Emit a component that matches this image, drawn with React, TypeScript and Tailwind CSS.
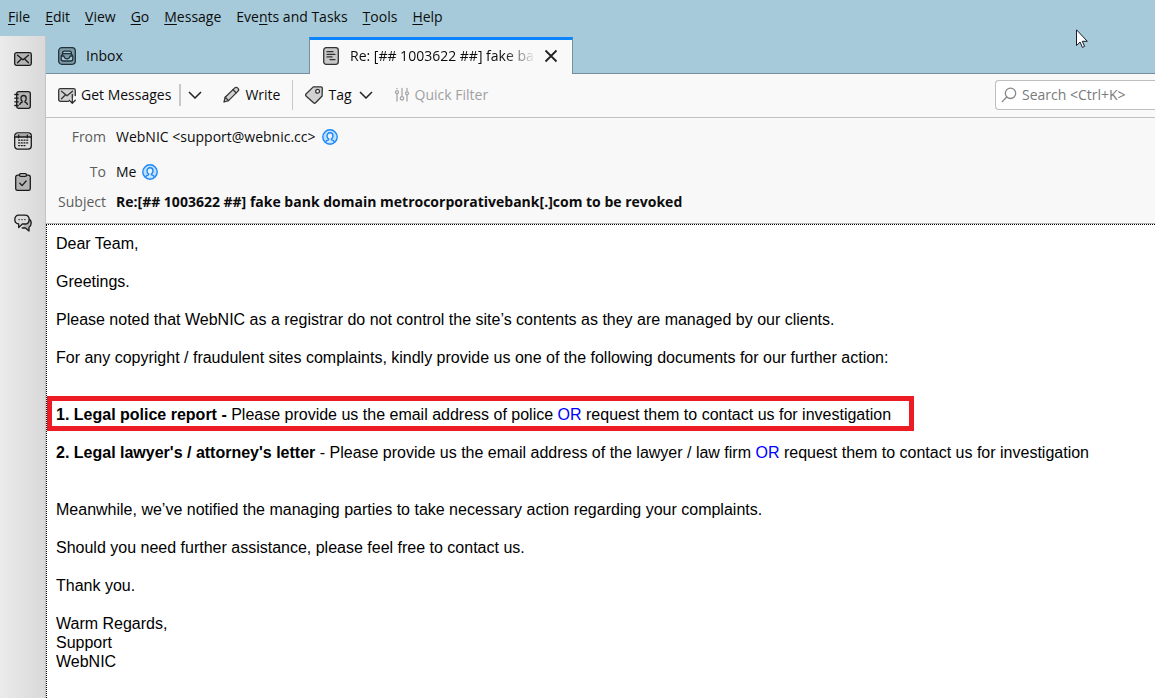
import React, { useState } from 'react';

interface MenuItem {
  before: string;
  hotkey: string;
  after: string;
}

const MENUS: MenuItem[] = [
  { before: '', hotkey: 'F', after: 'ile' },
  { before: '', hotkey: 'E', after: 'dit' },
  { before: '', hotkey: 'V', after: 'iew' },
  { before: '', hotkey: 'G', after: 'o' },
  { before: '', hotkey: 'M', after: 'essage' },
  { before: 'Eve', hotkey: 'n', after: 'ts and Tasks' },
  { before: '', hotkey: 'T', after: 'ools' },
  { before: '', hotkey: 'H', after: 'elp' },
];

function Icon({ children, className = '' }: { children: React.ReactNode; className?: string }) {
  return (
    <svg
      viewBox="0 0 18 18"
      className={`h-[18px] w-[18px] shrink-0 ${className}`}
      fill="none"
      stroke="currentColor"
      strokeWidth="1.3"
      strokeLinecap="round"
      strokeLinejoin="round"
      aria-hidden="true"
    >
      {children}
    </svg>
  );
}

const MailIcon = () => (
  <Icon>
    <rect x="0.7" y="2.7" width="16.6" height="12.6" rx="1.8" fill="#b4b4b4" />
    <path d="M3.5 5.2 9 9.8l5.5-4.6M3.5 12.8 7 9.2M14.5 12.8 11 9.2" />
  </Icon>
);

const AddressBookIcon = () => (
  <Icon>
    <rect x="2.7" y="0.7" width="13.6" height="16.6" rx="2" fill="#b4b4b4" />
    <path d="M0.8 3.5h3.4M0.8 7.2h3.4M0.8 10.8h3.4M0.8 14.5h3.4" />
    <path d="M5.8 13.4c.3-1.6 1.2-1.9 2.4-2.3v-.9C7.3 9.5 7 8.6 7 7.4c0-1.8 1-2.9 2.6-2.9s2.6 1.1 2.6 2.9c0 1.2-.3 2.1-1.2 2.8v.9c1.2.4 2.1.7 2.4 2.3" />
  </Icon>
);

const CalendarIcon = () => (
  <Icon>
    <rect x="0.7" y="0.9" width="16.6" height="16.2" rx="3" fill="#dcdcdc" />
    <path d="M1.4 3.4 3 1.500h12l1.600 1.900V5H1.400z" fill="#a9a9a9" stroke="none" />
    <path d="M0.8 5h16.4M4.7 3.2v2.6M13.3 3.2v2.6" />
    <path d="M4.6 8.2h1M7.3 8.2h1M10 8.2h1M12.7 8.2h1M4.6 10.9h1M7.3 10.9h1M10 10.9h1M12.7 10.9h1M4.6 13.6h1M7.3 13.6h1M10 13.6h1" />
  </Icon>
);

const TasksIcon = () => (
  <Icon>
    <rect x="1.7" y="2.2" width="14.6" height="15.2" rx="2" fill="#b4b4b4" />
    <rect x="5.5" y="0.7" width="7" height="2.6" rx="1.2" fill="#d4d4d4" />
    <path d="m5.8 10.2 2.3 2.4 4-4.6" />
  </Icon>
);

const ChatIcon = () => (
  <Icon>
    <path d="M14.5 4.8c1.7.7 2.7 2.2 2.7 4.3 0 2-.8 3.4-2.2 4.2v3.7l-3.6-3H8.2" fill="#b4b4b4" />
    <path d="M4.7 1.2h6.2c2.6 0 4.2 1.6 4.2 4.2S13.5 10 10.9 10H8.4L4.7 13.600V10C2.3 9.8.8 8 .8 5.6c0-2.6 1.5-4.4 3.9-4.4z" fill="#dcdcdc" />
    <path d="M5 5.6h.2M7.9 5.6h.2M10.8 5.6h.2" />
  </Icon>
);

const InboxIcon = () => (
  <Icon className="text-[#20313a]">
    <rect x="0.7" y="0.7" width="16.6" height="16.6" rx="3.2" fill="#7d9aa7" />
    <path d="M4.6 7V6c0-1.2.7-1.9 1.900-1.900h5c1.200 0 1.900.7 1.900 1.900v1" fill="#a6cad9" />
    <path d="M3.200 9h2.700c.3 1.900 1.300 2.900 3.100 2.900s2.800-1 3.100-2.900h2.700v3c0 1.200-.8 2-2 2H5.200c-1.200 0-2-.8-2-2z" fill="#a6cad9" />
    <path d="m3.600 8.400 1.400-1.700h8l1.400 1.700" />
  </Icon>
);

const MessageIcon = () => (
  <Icon className="text-[#333333]">
    <rect x="1.7" y="0.7" width="14.6" height="16.6" rx="2.5" fill="#c8c8c8" />
    <path d="M5 4.700h6M5 7.300h8M5 9.900h5M8 12.600h5" />
  </Icon>
);

const GetMessagesIcon = () => (
  <Icon className="text-[#333333]">
    <path d="M10.5 15.3h-8c-1 0-1.8-.8-1.8-1.8v-9c0-1 .8-1.800 1.800-1.800h13c1 0 1.800.8 1.800 1.800v5" fill="#d2d2d2" />
    <path d="M3.500 5.200 9 9.800l5.500-4.600M3.500 12.800 7 9.200" />
    <path d="M14.300 8.500v8.600M11.300 14.300l3 3 3-3" />
  </Icon>
);

const PencilIcon = () => (
  <Icon className="text-[#333333]">
    <path d="m2 16 1.200-4.800 9.600-9.300c.8-.8 1.900-.8 2.700 0l.5.500c.8.800.8 1.900 0 2.700l-9.500 9.500z" fill="#d2d2d2" />
    <path d="m11 3.700 3.200 3.200M3.200 11.200l3.300 3.400" />
  </Icon>
);

const TagIcon = () => (
  <Icon className="text-[#333333]">
    <path d="M8.300.900 16 .8c.8 0 1.300.5 1.300 1.300l-.2 7.900-6.500 6.800c-.6.600-1.400.6-2 0L1 9.900c-.5-.6-.5-1.300 0-1.900z" fill="#d2d2d2" />
    <circle cx="12.6" cy="5.3" r="1.9" fill="#f9f9fa" />
  </Icon>
);

const FilterIcon = () => (
  <Icon className="text-[#a6a6a6]">
    <path d="M4 2.500v.2M4 8.500V15M9 2.500v7M14 2.500v2.700M14 9v6" />
    <circle cx="4" cy="6.2" r="1.5" />
    <circle cx="9" cy="12.3" r="1.7" />
    <circle cx="14" cy="7.3" r="1.5" />
  </Icon>
);

const ChevronIcon = () => (
  <svg viewBox="0 0 14 8" className="h-2 w-[14px]" fill="none" stroke="#222222" strokeWidth="1.5" aria-hidden="true">
    <path d="m1 1 6 6 6-6" />
  </svg>
);

const ContactIcon = () => (
  <svg viewBox="0 0 16 16" className="h-4 w-4" fill="none" stroke="#1e88f5" strokeWidth="1.4" strokeLinecap="round" aria-hidden="true">
    <circle cx="8" cy="8" r="7.2" fill="#bfe0ff" />
    <path d="M4 12.600c.3-1.400 1.200-1.500 2.600-1.700v-1C5.500 9.200 5 8.200 5 6.900 5 5 6.200 3.800 8 3.800S11 5 11 6.900c0 1.300-.5 2.300-1.600 3v1c1.400.2 2.300.3 2.600 1.700" fill="#e6f3ff" />
  </svg>
);

const SPACES = [
  { label: 'Mail', icon: <MailIcon /> },
  { label: 'Address Book', icon: <AddressBookIcon /> },
  { label: 'Calendar', icon: <CalendarIcon /> },
  { label: 'Tasks', icon: <TasksIcon /> },
  { label: 'Chat', icon: <ChatIcon /> },
];

function MenuBar() {
  return (
    <nav className="flex h-9 items-center gap-[15px] px-2 pb-[2px]">
      {MENUS.map((m) => (
        <button key={m.hotkey + m.after} className="whitespace-nowrap">
          {m.before}
          <span className="underline underline-offset-2">{m.hotkey}</span>
          {m.after}
        </button>
      ))}
    </nav>
  );
}

function TabStrip() {
  return (
    <div className="flex h-[38px] border-b border-[#75909c]">
      <button className="flex w-[263px] items-center gap-[10px] px-3 pt-[2px]">
        <InboxIcon />
        Inbox
      </button>
      <div className="-mb-px mt-px flex w-[264px] items-center border-x border-t-3 border-x-[#75909c] border-t-[#0a84ff] bg-[#f9f9fa] pb-[2px] pl-3 pr-[14px]">
        <button className="flex min-w-0 flex-1 items-center gap-[10px]">
          <MessageIcon />
          <span className="flex-1 whitespace-nowrap text-left [mask-image:linear-gradient(to_left,transparent,black_32px)]">
            Re: [## 1003622 ##] fake ba
          </span>
        </button>
        <button aria-label="Close tab" className="ml-2">
          <svg viewBox="0 0 14 14" className="h-[14px] w-[14px]" stroke="#222222" strokeWidth="1.8" aria-hidden="true">
            <path d="m1.500 1.500 11 11M12.500 1.500l-11 11" />
          </svg>
        </button>
      </div>
    </div>
  );
}

function Toolbar() {
  const [query, setQuery] = useState('');

  return (
    <div className="flex h-11 items-center overflow-hidden border-b border-[#c0c0c2] bg-[#f9f9fa] pb-px pl-3">
      <button className="flex items-center gap-[5px] whitespace-nowrap">
        <GetMessagesIcon />
        Get Messages
      </button>
      <span className="ml-2 h-[22px] w-[2px] bg-[#c8c8c8]" />
      <button aria-label="Get messages options" className="ml-[7px]">
        <ChevronIcon />
      </button>
      <button className="ml-5 flex items-center gap-[5px]">
        <PencilIcon />
        Write
      </button>
      <span className="ml-3 h-[30px] w-px bg-[#c8c8c8]" />
      <button className="ml-3 flex items-center gap-[5px]">
        <TagIcon />
        Tag
        <span className="ml-[2px]">
          <ChevronIcon />
        </span>
      </button>
      <button className="ml-5 flex items-center gap-1 whitespace-nowrap text-[#a0a0a0]" disabled>
        <FilterIcon />
        Quick Filter
      </button>
      <label className="ml-auto flex h-[30px] w-40 items-center gap-[5px] rounded-l border border-r-0 border-[#bebebe] bg-white pl-[5px]">
        <svg viewBox="0 0 16 16" className="h-4 w-4 shrink-0" fill="none" stroke="#858585" strokeWidth="1.3" strokeLinecap="round" aria-hidden="true">
          <circle cx="9.5" cy="6.3" r="5.2" />
          <path d="m5.700 10-4.500 4.600" />
        </svg>
        <input
          type="text"
          aria-label="Search"
          value={query}
          onChange={(e) => setQuery(e.target.value)}
          placeholder="Search <Ctrl+K>"
          className="min-w-0 flex-1 outline-none placeholder:text-[#7a7a7a]"
        />
      </label>
    </div>
  );
}

function MessageHeader() {
  return (
    <header className="border-b border-[#b4b4b6] bg-[#f8f8f8] pb-[7px]">
      <div className="flex h-[38px] items-center gap-[10px]">
        <span className="w-[60px] text-right text-[#5c5c5c]">From</span>
        <span className="flex items-center gap-[6px]">
          WebNIC &lt;support@webnic.cc&gt;
          <ContactIcon />
        </span>
      </div>
      <div className="flex h-8 items-center gap-[10px]">
        <span className="w-[60px] text-right text-[#5c5c5c]">To</span>
        <span className="flex items-center gap-[6px]">
          Me
          <ContactIcon />
        </span>
      </div>
      <div className="flex h-7 items-center gap-[10px]">
        <span className="w-[60px] text-right text-[#5c5c5c]">Subject</span>
        <h1 className="font-bold">
          Re:[## 1003622 ##] fake bank domain metrocorporativebank[.]com to be revoked
        </h1>
      </div>
    </header>
  );
}

function MessageBody() {
  return (
    <article className="flex flex-1 flex-col gap-[19px] border-l border-t border-dotted border-black bg-white px-[9px] py-[9px] font-['Liberation_Sans',Arial,sans-serif] text-base leading-[19px] text-black">
      <p>Dear Team,</p>
      <p>Greetings.</p>
      <p>Please noted that WebNIC as a registrar do not control the site’s contents as they are managed by our clients.</p>
      <p>For any copyright / fraudulent sites complaints, kindly provide us one of the following documents for our further action:</p>
      <p className="relative mt-[19px] w-fit">
        <b>1. Legal police report - </b>
        Please provide us the email address of police <span className="text-[#0000ff]">OR</span> request them to contact us for investigation
        <span className="pointer-events-none absolute -bottom-[7px] -left-[9px] -right-[23px] -top-[9px] border-5 border-[#ed1c24]" />
      </p>
      <p>
        <b>2. Legal lawyer's / attorney's letter</b> - Please provide us the email address of the lawyer / law firm{' '}
        <span className="text-[#0000ff]">OR</span> request them to contact us for investigation
      </p>
      <p className="mt-[19px]">Meanwhile, we’ve notified the managing parties to take necessary action regarding your complaints.</p>
      <p>Should you need further assistance, please feel free to contact us.</p>
      <p>Thank you.</p>
      <p>
        Warm Regards,
        <br />
        Support
        <br />
        WebNIC
      </p>
    </article>
  );
}

export default function App() {
  return (
    <div className="relative flex min-h-screen flex-col overflow-hidden bg-[#a6cad9] font-['Open_Sans','Segoe_UI',sans-serif] text-sm text-[#0c0c0d]">
      <MenuBar />
      <div className="flex flex-1">
        <aside className="flex w-[46px] shrink-0 flex-col items-center gap-[23px] border-r border-[#c4c4c4] bg-linear-to-r from-[#ebebeb] to-[#d9d9d9] pt-[14px] text-[#1a1a1a]">
          {SPACES.map((space) => (
            <button key={space.label} aria-label={space.label}>
              {space.icon}
            </button>
          ))}
        </aside>
        <main className="flex min-w-0 flex-1 flex-col">
          <TabStrip />
          <Toolbar />
          <MessageHeader />
          <MessageBody />
        </main>
      </div>

      {/* Mouse pointer */}
      <svg viewBox="0 0 12 19" className="pointer-events-none absolute right-[67px] top-[29px] h-[19px] w-3" fill="#ffffff" stroke="#1a1a2a" aria-hidden="true">
        <path d="M.5.800v15.700l3.600-3.400 2.300 5.300 2.200-1-2.300-5.100h5z" />
      </svg>
    </div>
  );
}
